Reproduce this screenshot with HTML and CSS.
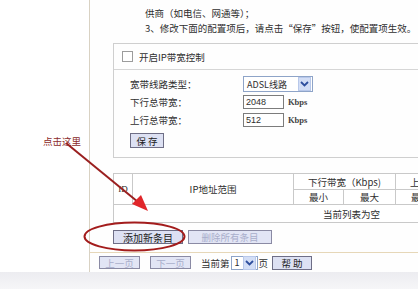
FILE: index.html
```html
<!DOCTYPE html>
<html lang="zh-CN">
<head>
<meta charset="utf-8">
<title>IP带宽控制</title>
<link rel="stylesheet" href="styles.css">
</head>
<body>
<div class="page">
  <div class="gutter"></div>
  <div class="panel">
    <div class="notes">
      <div class="note-line">供商（如电信、网通等）；</div>
      <div class="note-line">3、修改下面的配置项后，请点击“保存”按钮，使配置项生效。</div>
    </div>
    <div class="section">
      <div class="chk-row">
        <span class="checkbox"></span>
        <span>开启IP带宽控制</span>
      </div>
      <div class="form">
        <div class="row">
          <span class="label">宽带线路类型：</span>
          <span class="select select-wide"><span class="val">ADSL线路</span><span class="arrow"><svg width="9" height="6" viewBox="0 0 9 6"><path d="M1 1 L4.5 4.5 L8 1" fill="none" stroke="#2f4f9e" stroke-width="1.8"/></svg></span></span>
        </div>
        <div class="row">
          <span class="label">下行总带宽：</span>
          <span class="input">2048</span>
          <span class="unit">Kbps</span>
        </div>
        <div class="row">
          <span class="label">上行总带宽：</span>
          <span class="input">512</span>
          <span class="unit">Kbps</span>
        </div>
        <div class="btn btn-save">保 存</div>
      </div>
    </div>
    <table class="list">
      <colgroup>
        <col class="c-id"><col class="c-ip"><col class="c-bw"><col class="c-bw2"><col class="c-bw"><col class="c-bw2">
      </colgroup>
      <tr class="h1">
        <th rowspan="2" class="th-id">ID</th>
        <th rowspan="2">IP地址范围</th>
        <th colspan="2">下行带宽（Kbps)</th>
        <th colspan="2">上行带宽（Kbps)</th>
      </tr>
      <tr class="h2">
        <th>最小</th><th>最大</th><th>最小</th><th>最大</th>
      </tr>
      <tr class="empty">
        <td colspan="6"><span class="empty-text">当前列表为空</span></td>
      </tr>
    </table>
    <div class="actions">
      <div class="btn btn-add">添加新条目</div>
      <div class="btn btn-del disabled">删除所有条目</div>
    </div>
    <div class="nav">
      <div class="btn btn-page disabled">上一页</div>
      <div class="btn btn-page disabled">下一页</div>
      <span class="nav-text">当前第</span>
      <span class="select select-page"><span class="val">1</span><span class="arrow"><svg width="9" height="6" viewBox="0 0 9 6"><path d="M1 1 L4.5 4.5 L8 1" fill="none" stroke="#2f4f9e" stroke-width="1.8"/></svg></span></span>
      <span class="nav-text">页</span>
      <div class="btn btn-help">帮 助</div>
    </div>
  </div>
</div>
<div class="band"></div>

<div class="hint">点击这里</div>
<svg class="annot" width="418" height="289" viewBox="0 0 418 289">
  <line x1="66" y1="143" x2="138" y2="202" stroke="#9a1f1f" stroke-width="2"/>
  <polygon points="148,211 132,204 141,195" fill="#e0262a"/>
  <ellipse cx="134.5" cy="236.5" rx="50" ry="14" fill="none" stroke="#a31c1c" stroke-width="2"/>
</svg>
</body>
</html>
```

FILE: styles.css
```css
html, body {
  margin: 0;
  padding: 0;
  background: #ffffff;
}

body {
  width: 418px;
  height: 289px;
  overflow: hidden;
  position: relative;
  font-family: "Noto Sans CJK SC", "Liberation Sans", sans-serif;
  font-size: 9.5px;
  color: #2e2e2e;
}

.page {
  display: flex;
  height: 272px;
}

.gutter {
  width: 89px;
  flex: none;
}

.panel {
  flex: 1;
  min-width: 0;
  border-left: 1px solid #d9d2c3;
  overflow: hidden;
  display: flex;
  flex-direction: column;
  background: #fefefe;
}

.notes {
  padding: 6px 0 0 55px;
  line-height: 15px;
  white-space: nowrap;
}

.section {
  margin: 7px 0 0 23px;
  border: 1px solid #cfcfcf;
  border-right: none;
}

.chk-row {
  height: 25px;
  display: flex;
  align-items: center;
  padding-left: 8px;
  border-bottom: 1px solid #d6d6d6;
  white-space: nowrap;
}

.checkbox {
  width: 9px;
  height: 9px;
  border: 1px solid #9c9c9c;
  background: #fff;
  margin-right: 6px;
}

.form {
  padding: 5px 0 9px 16px;
}

.row {
  display: flex;
  align-items: center;
  height: 18px;
  white-space: nowrap;
}

.label {
  width: 113px;
  flex: none;
}

.select {
  display: flex;
  align-items: center;
  height: 16px;
  box-sizing: border-box;
  border: 1px solid #8ea4c8;
  background: #fff;
  padding: 0 1px 0 3px;
  font-size: 9px;
}

.select .val {
  flex: 1;
}

.select .arrow {
  width: 11px;
  height: 12px;
  background: #d3def6;
  border: 1px solid #b8c8ea;
  display: flex;
  align-items: center;
  justify-content: center;
}

.select-wide {
  width: 70px;
}

.input {
  width: 41px;
  height: 14px;
  box-sizing: border-box;
  border: 1px solid #7c7c7c;
  background: #fff;
  padding-left: 2px;
  font-family: "Liberation Sans", sans-serif;
  font-size: 9px;
  line-height: 12px;
}

.unit {
  margin-left: 4px;
  font-family: "Liberation Serif", serif;
  font-size: 8.5px;
  font-weight: bold;
  color: #444;
}

.btn {
  display: flex;
  align-items: center;
  justify-content: center;
  box-sizing: border-box;
  border: 1px solid #6e6e86;
  background: #dde1f3;
  color: #222;
  white-space: nowrap;
  flex: none;
}

.btn.disabled {
  color: #a9aecb;
  border-color: #8a8aa4;
  background: #e2e5f5;
}

.btn-save {
  width: 34px;
  height: 15px;
  margin-top: 4px;
}

.list {
  margin: 15px 0 0 23px;
  border-collapse: collapse;
  table-layout: fixed;
  width: 384px;
  flex: none;
}

.c-id { width: 19px; }
.c-ip { width: 161px; }
.c-bw { width: 50px; }
.c-bw2 { width: 52px; }

.list th, .list td {
  border: 1px solid #c9c9c9;
  padding: 0;
  font-weight: normal;
  text-align: center;
  white-space: nowrap;
  overflow: hidden;
  background: #fff;
}

.list .h1 th { height: 15px; }
.list .h2 th { height: 14px; }
.list .empty td { height: 17px; text-align: left; }

.list .th-id {
  font-family: "Liberation Serif", serif;
  font-size: 9px;
  text-align: center;
}

.empty-text {
  padding-left: 209px;
}

.actions {
  display: flex;
  gap: 5px;
  padding: 7px 0 8px 23px;
  border-bottom: 1px solid #e6d7b8;
}

.btn-add {
  width: 70px;
  height: 14px;
  font-size: 10px;
}

.btn-del {
  width: 84px;
  height: 14px;
}

.nav {
  display: flex;
  align-items: center;
  height: 19px;
  padding-left: 9px;
  white-space: nowrap;
}

.btn-page {
  width: 41px;
  height: 13px;
  margin-right: 10px;
}

.nav-text {
  flex: none;
}

.select-page {
  width: 27px;
  height: 14px;
  margin: 0 1px;
}

.btn-help {
  width: 40px;
  height: 14px;
  margin-left: 4px;
}

.band {
  height: 17px;
  background: linear-gradient(#ececf0, #f6f6f8);
}

.hint {
  position: absolute;
  left: 43px;
  top: 134px;
  color: #8c2b2b;
  font-size: 9.5px;
  white-space: nowrap;
}

.annot {
  position: absolute;
  left: 0;
  top: 0;
  pointer-events: none;
}
```
